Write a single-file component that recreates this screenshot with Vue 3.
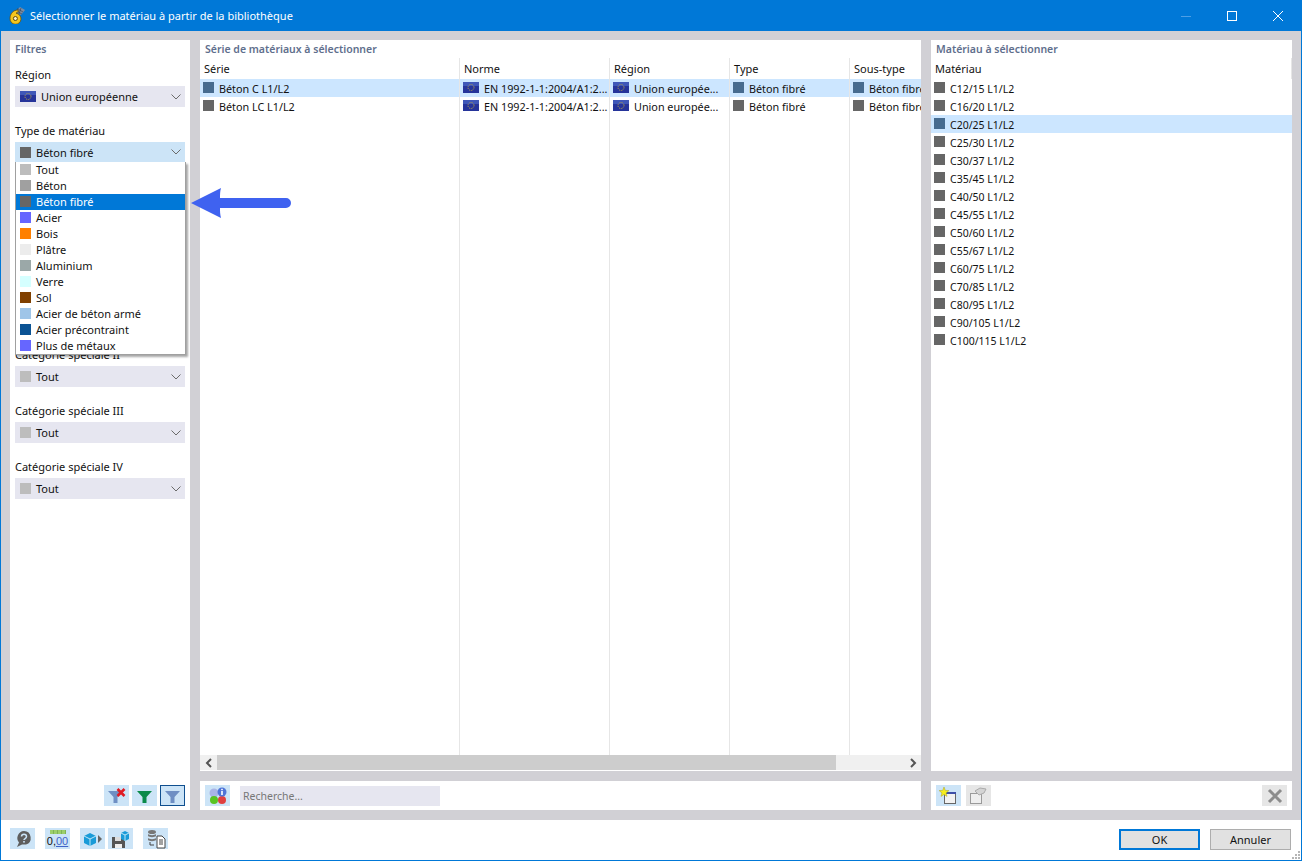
<template>
  <div class="dialog">
    <svg class="defs" width="0" height="0">
      <defs>
        <symbol id="eu" viewBox="0 0 16 11">
          <rect width="16" height="11" fill="#26349a" />
          <rect width="16" height="4" fill="#3f57b8" />
          <circle cx="8" cy="5.500" r="3" fill="none" stroke="#b9a64a" stroke-width="1" stroke-dasharray="1 .9" />
        </symbol>
      </defs>
    </svg>

    <header class="titlebar">
      <svg class="app-logo" width="16" height="17" viewBox="0 0 16 17">
        <path d="M6 5l5-5 5 3-4 5z" fill="#7d8da3" />
        <path d="M7 4l6 3M9 2l5 3M9 1l-2 5M12 1l-2 6" stroke="#3c4a60" stroke-width=".7" />
        <path d="M9 3C4 3 1 7 1 11.500a5.500 5.500 0 1 0 6-5.200c.8-1 1.500-1.500 2.600-1.800z" fill="#f5c61e" stroke="#6e5208" stroke-width=".8" />
        <circle cx="6.400" cy="11.500" r="2" fill="#fff7d0" stroke="#5f4706" stroke-width="1" />
      </svg>
      <span class="title">Sélectionner le matériau à partir de la bibliothèque</span>
      <div class="win-btns">
        <svg width="46" height="30" viewBox="0 0 46 30"><path d="M18 15.500h10" stroke="#4d9fe6" /></svg>
        <svg width="46" height="30" viewBox="0 0 46 30"><rect x="18.500" y="10.500" width="9" height="9" fill="none" stroke="#fff" /></svg>
        <svg width="46" height="30" viewBox="0 0 46 30"><path d="M18 10l10 10M28 10L18 20" stroke="#fff" /></svg>
      </div>
    </header>

    <main class="body">
      <section class="col col-left">
        <div class="panel filters">
          <h3 class="panel-title">Filtres</h3>
          <div class="filter-list">
            <div v-for="(f, idx) in filters" :key="idx" class="filter" :class="{ covered: f.covered }">
              <label>{{ f.label }}</label>
              <div class="combo" :class="{ open: f.open }">
                <svg v-if="f.flag" class="flag" width="16" height="11"><use href="#eu" /></svg>
                <i v-else class="swatch" :style="{ background: f.color }"></i>
                <span>{{ f.value }}</span>
                <svg class="chev" width="10" height="6" viewBox="0 0 10 6"><path d="M.5.500L5 5 9.500.500" fill="none" stroke="#6b6b6b" /></svg>
              </div>
              <ul v-if="f.open" class="menu">
                <li v-for="m in materials" :key="m.name" :class="{ active: m.active }">
                  <i class="swatch" :style="{ background: m.color }"></i>{{ m.name }}
                </li>
              </ul>
            </div>
          </div>
          <div class="filter-tools">
            <button class="tool">
              <svg width="25" height="21" viewBox="0 0 25 21">
                <path d="M4 6h15l-5.500 6v6h-4v-6z" fill="#6f8fc4" />
                <path d="M13.500 4l7 7M20.500 4l-7 7" stroke="#e01b24" stroke-width="2.600" />
              </svg>
            </button>
            <button class="tool">
              <svg width="25" height="21" viewBox="0 0 25 21"><path d="M5 6h15l-5.500 6v6h-4v-6z" fill="#0b8a4a" /></svg>
            </button>
            <button class="tool pressed">
              <svg width="23" height="19" viewBox="0 0 23 19"><path d="M4 5h15l-5.500 6v6h-4v-6z" fill="#6f8fc4" /></svg>
            </button>
          </div>
        </div>
      </section>

      <section class="col col-mid">
        <div class="panel grow">
          <h3 class="panel-title">Série de matériaux à sélectionner</h3>
          <div class="table">
            <div v-for="c in columns" :key="c.head" class="column" :style="{ width: c.width + 'px' }">
              <div class="th">{{ c.head }}</div>
              <div v-for="(cell, i) in c.cells" :key="i" class="td" :class="{ selected: i === 0 }">
                <svg v-if="c.flag" class="flag" width="16" height="11"><use href="#eu" /></svg>
                <i v-else class="swatch" :style="{ background: i === 0 ? '#466b8f' : '#666' }"></i>
                <span class="cell-text">{{ cell }}</span>
              </div>
            </div>
          </div>
          <div class="scrollbar">
            <span class="sb-btn">
              <svg width="8" height="10" viewBox="0 0 8 10"><path d="M6 1L2 5l4 4" fill="none" stroke="#555" stroke-width="2" /></svg>
            </span>
            <span class="sb-thumb"></span>
            <span class="sb-track"></span>
            <span class="sb-btn">
              <svg width="8" height="10" viewBox="0 0 8 10"><path d="M2 1l4 4-4 4" fill="none" stroke="#555" stroke-width="2" /></svg>
            </span>
          </div>
        </div>
        <div class="panel toolbar">
          <button class="tool">
            <svg width="20" height="18" viewBox="0 0 20 18">
              <circle cx="6" cy="6" r="4.500" fill="#a9b4e6" />
              <circle cx="6" cy="13" r="4" fill="#58c322" />
              <circle cx="14" cy="13" r="4" fill="#e04040" />
              <circle cx="14" cy="5" r="4.500" fill="#4f74d8" />
              <rect x="13.200" y="4" width="1.600" height="4" fill="#fff" />
              <rect x="13.200" y="1.800" width="1.600" height="1.400" fill="#fff" />
            </svg>
          </button>
          <div class="search">Recherche...</div>
        </div>
      </section>

      <section class="col col-right">
        <div class="panel grow">
          <h3 class="panel-title">Matériau à sélectionner</h3>
          <div class="th th-single">Matériau</div>
          <ul class="grades">
            <li v-for="g in grades" :key="g" :class="{ selected: g === 'C20/25 L1/L2' }">
              <i class="swatch" :style="{ background: g === 'C20/25 L1/L2' ? '#466b8f' : '#666' }"></i>
              <span class="grade-text">{{ g }}</span>
            </li>
          </ul>
        </div>
        <div class="panel toolbar">
          <button class="tool">
            <svg width="25" height="21" viewBox="0 0 25 21">
              <rect x="8.500" y="8.500" width="11" height="10" fill="#f2f2f2" stroke="#666" />
              <rect x="8" y="7" width="12" height="2" fill="#3d4fa8" />
              <path d="M8 2l1.300 3.400 3.600.200-2.800 2.300.9 3.500L8 9.400l-3 2 .9-3.500-2.800-2.300 3.600-.200z" fill="#f6ee1c" stroke="#a8a020" stroke-width=".5" />
            </svg>
          </button>
          <button class="tool off">
            <svg width="25" height="21" viewBox="0 0 25 21">
              <rect x="4.500" y="8.500" width="11" height="10" fill="#eee" stroke="#9a9a9a" />
              <path d="M9 6l5-3 6 1-2 4-5 2z" fill="#d4d4d4" stroke="#aaa" />
            </svg>
          </button>
          <span class="spacer"></span>
          <button class="tool off">
            <svg width="18" height="18" viewBox="0 0 18 18"><path d="M3 3l12 12M15 3L3 15" stroke="#8c8c8c" stroke-width="3" /></svg>
          </button>
        </div>
      </section>
    </main>

    <footer class="footer">
      <button class="tool">
        <svg width="20" height="18" viewBox="0 0 20 18">
          <path d="M11 1a7 7 0 0 1 2 13.600H9L4 17l2-4.500A7 7 0 0 1 11 1z" fill="#5e5e5e" />
          <path d="M8.500 6.500c0-3 5-3 5 0 0 2-2.500 2-2.500 3.500" fill="none" stroke="#cbe4f8" stroke-width="1.500" />
          <rect x="10.200" y="11" width="1.600" height="1.600" fill="#cbe4f8" />
        </svg>
      </button>
      <button class="tool units">
        <span class="ruler"></span>
        <span class="units-num">0,<u>00</u></span>
      </button>
      <div class="foot-pair">
        <button class="tool">
          <svg width="20" height="18" viewBox="0 0 20 18">
            <path d="M1 6l6-3 6 3v7l-6 3-6-3z" fill="#1a9bd8" />
            <path d="M7 9v7M1 6l6 3 6-3" stroke="#bfe6f7" fill="none" />
            <path d="M15 5l4 4-4 4z" fill="#666" />
          </svg>
        </button>
        <button class="tool">
          <svg width="20" height="20" viewBox="0 0 20 20">
            <path d="M1 8h11l2 2v9H1z" fill="#555" />
            <rect x="4" y="8" width="6" height="4" fill="#ddd" />
            <rect x="4" y="15" width="7" height="4" fill="#eee" />
            <path d="M10 4l4-2 4 2v6l-4 2-4-2z" fill="#1a9bd8" />
            <path d="M14 6v6M10 4l4 2 4-2" stroke="#bfe6f7" fill="none" />
          </svg>
        </button>
      </div>
      <button class="tool">
        <svg width="20" height="20" viewBox="0 0 20 20">
          <ellipse cx="6" cy="3" rx="4" ry="2" fill="#777" />
          <path d="M2 5c1 1.500 7 1.500 8 0v2c-1 1.500-7 1.500-8 0zM2 9c1 1.500 7 1.500 8 0v2c-1 1.500-7 1.500-8 0z" fill="#777" />
          <path d="M4 13v3h4" fill="none" stroke="#444" />
          <path d="M11 7h5l3 3v9h-8z" fill="#fff" stroke="#444" />
          <path d="M13 11h4M13 13h4M13 15h4" stroke="#444" />
        </svg>
      </button>
      <span class="spacer"></span>
      <button class="btn primary">OK</button>
      <button class="btn">Annuler</button>
      <svg class="grip" width="10" height="10" viewBox="0 0 10 10">
        <path d="M7 1h2v2H7zM4 4h2v2H4zM7 4h2v2H7zM1 7h2v2H1zM4 7h2v2H4zM7 7h2v2H7z" fill="#b5b5b5" />
      </svg>
    </footer>

    <svg class="arrow" width="102" height="32" viewBox="0 0 102 32">
      <path d="M1 15L31 0c-1 3-1 7-1 10h66a5 5 0 0 1 0 10H30c0 3 0 6 1 10z" fill="#3f62f0" />
    </svg>
  </div>
</template>

<script setup>
const tout = { value: "Tout", color: "#bdbdbd" };
const regionCut = "Union europ\u00e9e...";

const filters = [
  { label: "Région", value: "Union européenne", flag: true },
  { label: "Type de matériau", value: "Béton fibré", color: "#666", open: true },
  // ces trois filtres sont entièrement cachés par la liste ouverte
  { ...tout, label: "", covered: true },
  { ...tout, label: "", covered: true },
  { ...tout, label: "", covered: true },
  { ...tout, label: "Catégorie spéciale II" },
  { ...tout, label: "Catégorie spéciale III" },
  { ...tout, label: "Catégorie spéciale IV" },
];

const materials = [
  { name: "Tout", color: "#bdbdbd" },
  { name: "Béton", color: "#a0a0a0" },
  { name: "Béton fibré", color: "#666", active: true },
  { name: "Acier", color: "#6666ff" },
  { name: "Bois", color: "#ff8000" },
  { name: "Plâtre", color: "#ececec" },
  { name: "Aluminium", color: "#9ba8a8" },
  { name: "Verre", color: "#d5ffff" },
  { name: "Sol", color: "#804000" },
  { name: "Acier de béton armé", color: "#9fc5e8" },
  { name: "Acier précontraint", color: "#0b5394" },
  { name: "Plus de métaux", color: "#6666ff" },
];

const columns = [
  { head: "Série", width: 260, cells: ["Béton C L1/L2", "Béton LC L1/L2"] },
  { head: "Norme", width: 150, flag: true, cells: ["EN 1992-1-1:2004/A1:2...", "EN 1992-1-1:2004/A1:2..."] },
  { head: "Région", width: 120, flag: true, cells: [regionCut, regionCut] },
  { head: "Type", width: 120, cells: ["Béton fibré", "Béton fibré"] },
  { head: "Sous-type", width: 71, cells: ["Béton fibré", "Béton fibré"] },
];

const grades = [
  "C12/15 L1/L2",
  "C16/20 L1/L2",
  "C20/25 L1/L2",
  "C25/30 L1/L2",
  "C30/37 L1/L2",
  "C35/45 L1/L2",
  "C40/50 L1/L2",
  "C45/55 L1/L2",
  "C50/60 L1/L2",
  "C55/67 L1/L2",
  "C60/75 L1/L2",
  "C70/85 L1/L2",
  "C80/95 L1/L2",
  "C90/105 L1/L2",
  "C100/115 L1/L2",
];
</script>

<style>
html,
body {
  margin: 0;
  overflow: hidden;
}
</style>

<style scoped>
.dialog {
  position: relative;
  width: 1302px;
  height: 861px;
  box-sizing: border-box;
  display: flex;
  flex-direction: column;
  border: 1px solid #0078d7;
  border-top: 0;
  background: #fff;
  font-family: "Noto Sans", "Open Sans", sans-serif;
  font-size: 11px;
  color: #111;
}
.defs {
  position: absolute;
}
.titlebar {
  height: 31px;
  flex: none;
  display: flex;
  align-items: center;
  background: #0078d7;
  color: #fff;
  padding-left: 8px;
}
.app-logo {
  margin-right: 5px;
}
.title {
  font-size: 11px;
}
.win-btns {
  margin-left: auto;
  display: flex;
}
.body {
  flex: 1;
  min-height: 0;
  display: flex;
  gap: 10px;
  padding: 9px 9px 10px;
  background: #d1d0d5;
}
.col {
  display: flex;
  flex-direction: column;
  gap: 10px;
}
.col-left {
  width: 180px;
}
.col-mid {
  width: 721px;
}
.col-right {
  width: 361px;
}
.panel {
  background: #fff;
  display: flex;
  flex-direction: column;
  min-height: 0;
}
.grow {
  flex: 1;
}
.filters {
  flex: 1;
}
.panel-title {
  margin: 0;
  height: 18px;
  line-height: 18px;
  padding-left: 5px;
  font-size: 10.5px;
  font-weight: 600;
  color: #5f6f8d;
}
.filter-list {
  padding: 10px 5px 0;
  display: flex;
  flex-direction: column;
  gap: 17px;
}
.filter {
  position: relative;
  display: flex;
  flex-direction: column;
}
.filter.covered {
  visibility: hidden;
}
.filter label {
  height: 18px;
  line-height: 13px;
}
.filter-tools {
  margin-top: auto;
  display: flex;
  justify-content: flex-end;
  gap: 3px;
  padding: 0 5px 4px;
}
.combo {
  height: 21px;
  display: flex;
  align-items: center;
  gap: 5px;
  padding: 0 4px 0 5px;
  background: #e6e6f0;
}
.combo.open {
  height: 20px;
  margin-bottom: 1px;
  background: #cce4f7;
}
.chev {
  margin-left: auto;
}
.swatch {
  display: inline-block;
  flex: none;
  width: 11px;
  height: 11px;
}
.flag {
  flex: none;
}
.menu {
  position: absolute;
  top: 38px;
  left: 0;
  z-index: 5;
  width: 171px;
  box-sizing: border-box;
  margin: 0;
  padding: 0;
  list-style: none;
  background: #fff;
  border: 1px solid #a0a0a0;
  border-top: 0;
  box-shadow: 2px 2px 2px rgba(0, 0, 0, 0.35);
}
.menu li {
  height: 16px;
  box-sizing: border-box;
  display: flex;
  align-items: center;
  gap: 5px;
  padding: 0 0 2px 4px;
}
.menu li.active {
  background: #0078d7;
  color: #fff;
}
.table {
  flex: 1;
  display: flex;
  min-height: 0;
  overflow: hidden;
}
.column {
  box-sizing: border-box;
  flex: none;
  border-right: 1px solid #e6e6e6;
  overflow: hidden;
}
.column:last-child {
  border-right: 0;
}
.th {
  height: 21px;
  line-height: 22px;
  padding-left: 4px;
  white-space: nowrap;
}
.td {
  height: 18px;
  display: flex;
  align-items: center;
  gap: 5px;
  padding-left: 3px;
  white-space: nowrap;
  font-size: 10.8px;
}
.td .swatch,
.td .flag,
.grades .swatch {
  margin-bottom: 2px;
}
.grade-text {
  padding-top: 2px;
}
.td.selected {
  background: #cce6ff;
}
.scrollbar {
  height: 16px;
  flex: none;
  display: flex;
  border-bottom: 1px solid #fff;
  box-sizing: border-box;
}
.sb-btn {
  width: 17px;
  flex: none;
  display: flex;
  align-items: center;
  justify-content: center;
  background: #f0f0f0;
}
.sb-thumb {
  width: 619px;
  flex: none;
  background: #cdcdcd;
}
.sb-track {
  flex: 1;
  background: #f0f0f0;
}
.toolbar {
  height: 29px;
  flex: none;
  flex-direction: row;
  align-items: center;
  gap: 5px;
  padding: 0 5px;
}
.spacer {
  flex: 1;
}
.tool {
  width: 25px;
  height: 21px;
  flex: none;
  padding: 0;
  border: 0;
  background: #cce4f7;
  display: flex;
  align-items: center;
  justify-content: center;
}
.tool.off {
  background: #e6e6e6;
}
.tool.pressed {
  border: 1px solid #0f4f8f;
}
.search {
  width: 200px;
  height: 20px;
  line-height: 20px;
  margin-left: 5px;
  padding-left: 3px;
  box-sizing: border-box;
  background: #e6e6f0;
  color: #777;
  font-size: 10.5px;
}
.th-single {
  padding-left: 4px;
  border-right: 1px solid #e6e6e6;
}
.grades {
  margin: 0;
  padding: 0;
  list-style: none;
  font-size: 10.5px;
}
.grades li {
  height: 18px;
  display: flex;
  align-items: center;
  gap: 5px;
  padding-left: 3px;
}
.grades li.selected {
  background: #cce6ff;
}
.footer {
  position: relative;
  height: 40px;
  box-sizing: border-box;
  flex: none;
  display: flex;
  align-items: center;
  padding: 0 10px 3px 9px;
}
.footer > .tool {
  margin-right: 10px;
}
.foot-pair {
  display: flex;
  gap: 3px;
  margin-right: 10px;
}
.units {
  flex-direction: column;
  gap: 0;
}
.ruler {
  width: 16px;
  height: 4px;
  background: repeating-linear-gradient(90deg, #9ccf6a 0 3px, #7fb356 3px 4px);
}
.units-num {
  font-size: 11px;
  line-height: 14px;
  color: #111;
}
.units-num u {
  color: #3f62c8;
}
.btn {
  width: 81px;
  height: 21px;
  box-sizing: border-box;
  margin: 2px 0 0 10px;
  padding: 0;
  font: inherit;
  font-size: 11px;
  color: #111;
  background: #e1e1e1;
  border: 1px solid #adadad;
}
.btn.primary {
  border: 2px solid #0078d7;
}
.grip {
  position: absolute;
  right: 0;
  bottom: 0;
}
.arrow {
  position: absolute;
  left: 189px;
  top: 188px;
  z-index: 6;
}
</style>
